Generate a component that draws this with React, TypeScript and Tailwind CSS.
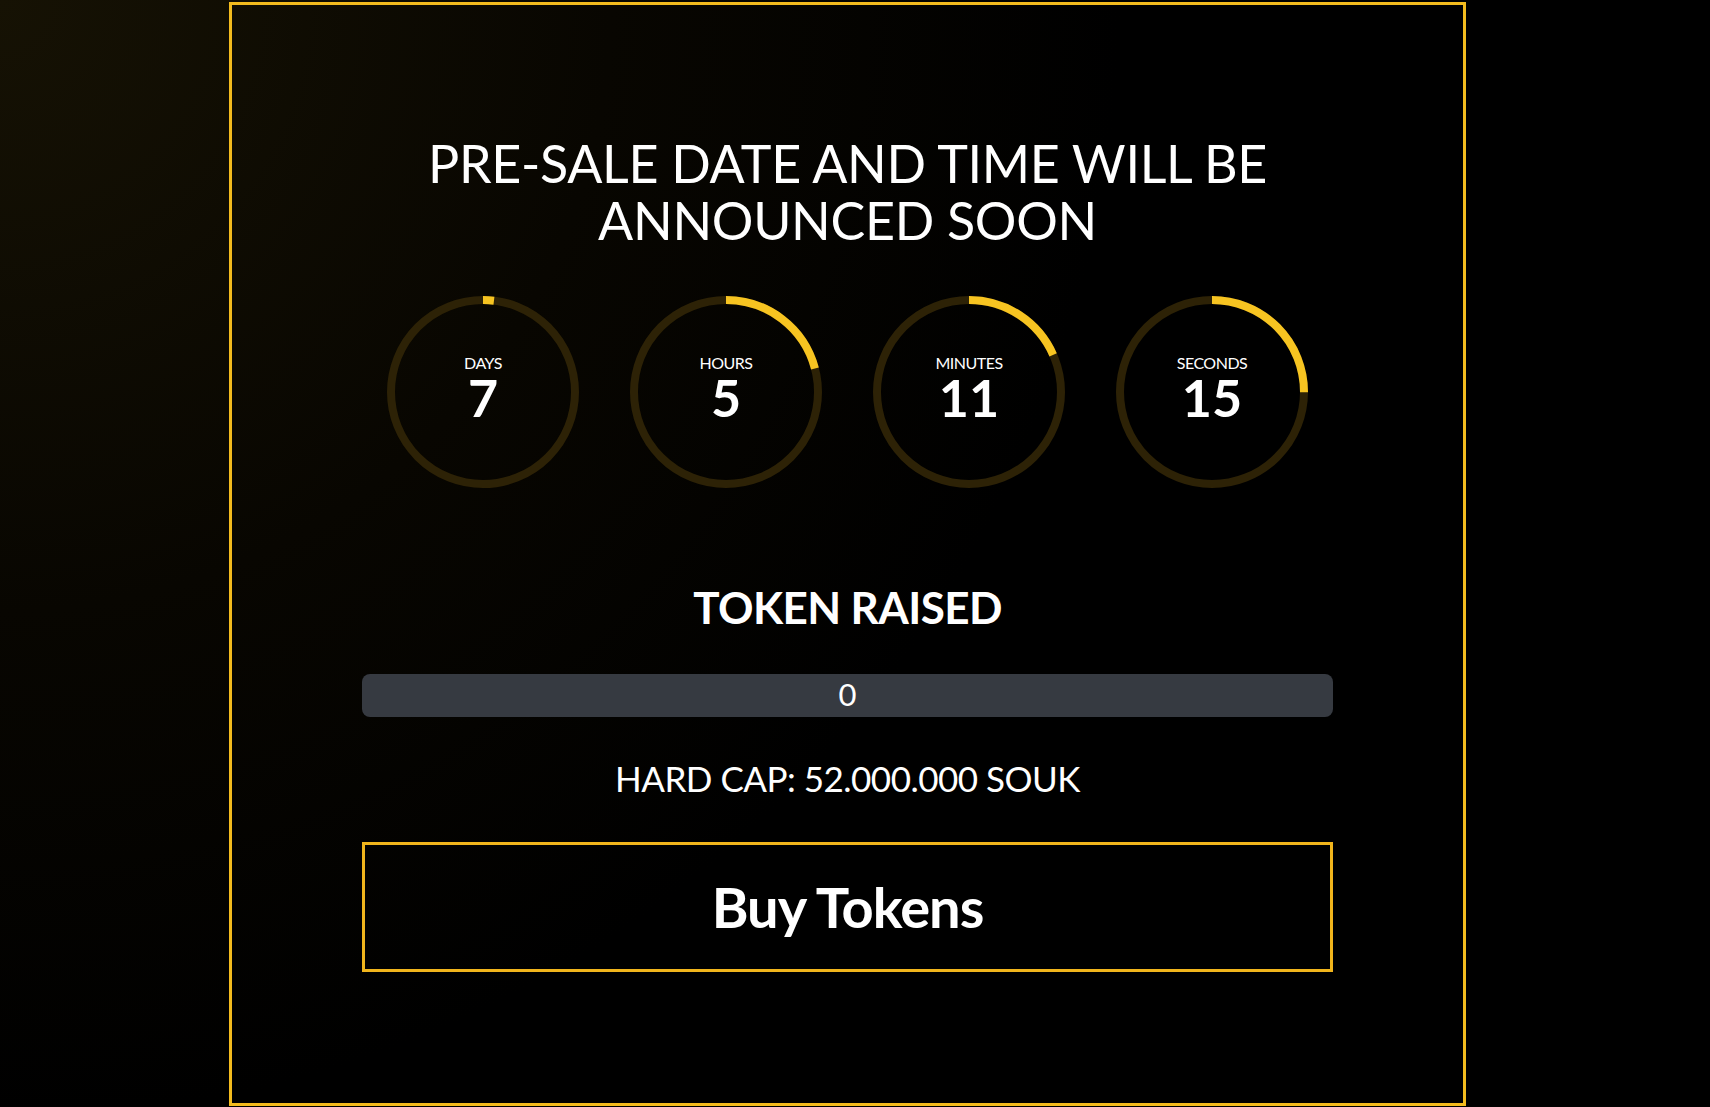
import React from "react";

const R = 92;
const C = 2 * Math.PI * R;

function Ring({ label, value, frac }: { label: string; value: string; frac: number }) {
  const len = C * frac;
  return (
    <div className="relative w-[194px] h-[194px]">
      <svg width="194" height="194" viewBox="0 0 194 194" className="block">
        <circle cx="97" cy="97" r={R} fill="none" stroke="#2d2206" strokeWidth="8" />
        <circle
          cx="97"
          cy="97"
          r={R}
          fill="none"
          stroke="#f7c421"
          strokeWidth="8"
          strokeDasharray={`${len} ${C}`}
          transform="rotate(-90 97 97)"
        />
      </svg>
      <div className="absolute inset-0 flex flex-col items-center justify-center pb-[9px] text-white font-['Lato','Open_Sans',sans-serif]">
        <div className="text-[16px] leading-[16px] tracking-[-0.5px]">{label}</div>
        <div className="mt-[3px] text-[52px] leading-[46px] font-bold">{value}</div>
      </div>
    </div>
  );
}

export default function App() {
  return (
    <div className="w-[1710px] h-[1107px] overflow-hidden bg-black bg-[radial-gradient(circle_at_0_0,#161204_0%,#080601_30%,#000_55%)] font-['Lato','Open_Sans',sans-serif] text-white">
      <div className="ml-[229px] mt-[2px] w-[1237px] h-[1104px] border-[3px] border-[#f3bb1e] flex flex-col items-center pt-[130px]">
        <h1 className="text-[52px] leading-[57px] font-normal text-center tracking-[-0.3px]">
          PRE-SALE DATE AND TIME WILL BE
          <br />
          ANNOUNCED SOON
        </h1>
        <div className="mt-[46px] flex gap-[49px]">
          <Ring label="DAYS" value="7" frac={7 / 365} />
          <Ring label="HOURS" value="5" frac={5 / 24} />
          <Ring label="MINUTES" value="11" frac={11 / 60} />
          <Ring label="SECONDS" value="15" frac={15 / 60} />
        </div>
        <div className="mt-[92px] text-[44px] leading-[53px] font-bold tracking-[-0.6px]">TOKEN RAISED</div>
        <div className="mt-[40px] w-[971px] h-[43px] rounded-[8px] bg-[#363a41] flex items-center justify-center text-[31px] leading-none pb-[2px]">
          0
        </div>
        <div className="mt-[40px] text-[35px] leading-[42px] tracking-[-0.5px]">HARD CAP: 52.000.000 SOUK</div>
        <button className="mt-[43px] w-[971px] h-[130px] border-[3px] border-[#f1b51c] bg-transparent flex items-center justify-center text-[56px] font-bold tracking-[-1px] text-white">
          Buy Tokens
        </button>
      </div>
    </div>
  );
}
